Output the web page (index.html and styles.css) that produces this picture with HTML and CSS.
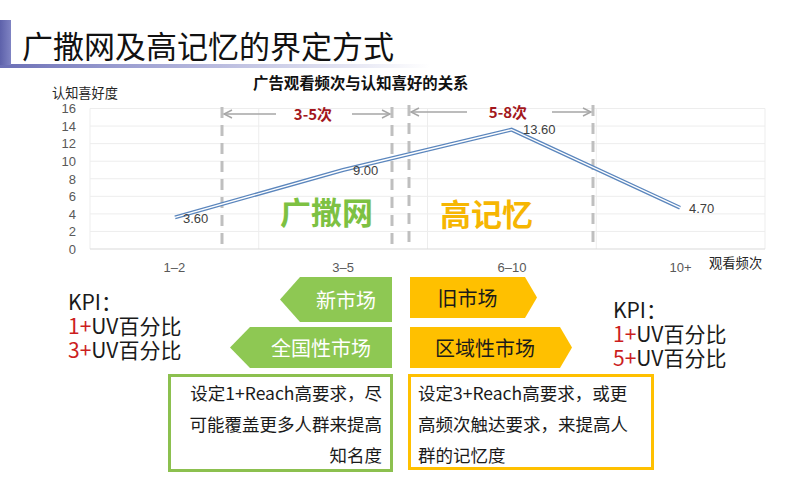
FILE: index.html
```html
<!DOCTYPE html>
<html lang="zh-CN">
<head>
<meta charset="utf-8">
<title>广撒网及高记忆的界定方式</title>
<link rel="stylesheet" href="styles.css">
</head>
<body>
<div class="slide">
  <header class="head">
    <div class="head-mark"></div>
    <div class="head-title">广撒网及高记忆的界定方式</div>
  </header>

  <svg class="chart" width="800" height="209" viewBox="0 68 800 209" xmlns="http://www.w3.org/2000/svg">
    <text class="c-title" x="253" y="88.7">广告观看频次与认知喜好的关系</text>
    <text class="c-axis-title" x="52" y="97.5">认知喜好度</text>

    <g class="grid">
      <line x1="90" y1="108.5" x2="765" y2="108.5"/>
      <line x1="90" y1="126.06" x2="765" y2="126.06"/>
      <line x1="90" y1="143.63" x2="765" y2="143.63"/>
      <line x1="90" y1="161.19" x2="765" y2="161.19"/>
      <line x1="90" y1="178.75" x2="765" y2="178.75"/>
      <line x1="90" y1="196.31" x2="765" y2="196.31"/>
      <line x1="90" y1="213.88" x2="765" y2="213.88"/>
      <line x1="90" y1="231.44" x2="765" y2="231.44"/>
      <line x1="90" y1="108.5" x2="90" y2="249"/>
      <line x1="258.75" y1="108.5" x2="258.75" y2="249"/>
      <line x1="427.5" y1="108.5" x2="427.5" y2="249"/>
      <line x1="596.25" y1="108.5" x2="596.25" y2="249"/>
      <line x1="765" y1="108.5" x2="765" y2="249"/>
    </g>
    <line class="axis" x1="90" y1="249" x2="765" y2="249"/>

    <g class="ytick">
      <text x="76" y="113.2">16</text>
      <text x="76" y="130.8">14</text>
      <text x="76" y="148.3">12</text>
      <text x="76" y="165.9">10</text>
      <text x="76" y="183.5">8</text>
      <text x="76" y="201">6</text>
      <text x="76" y="218.6">4</text>
      <text x="76" y="236.1">2</text>
      <text x="76" y="253.7">0</text>
    </g>

    <g class="xtick">
      <text x="174.4" y="271.5">1–2</text>
      <text x="343.1" y="271.5">3–5</text>
      <text x="511.9" y="271.5">6–10</text>
      <text x="680.6" y="271.5">10+</text>
    </g>
    <text class="c-xtitle" x="709" y="268">观看频次</text>

    <g class="dash">
      <line x1="222" y1="107" x2="222" y2="249"/>
      <line x1="392" y1="107" x2="392" y2="249"/>
      <line x1="409" y1="105" x2="409" y2="249"/>
      <line x1="593" y1="105" x2="593" y2="249"/>
    </g>

    <g class="span-arrow">
      <line x1="224" y1="114" x2="276" y2="114"/>
      <polyline points="232,110 224,114 232,118"/>
      <line x1="352" y1="114" x2="390" y2="114"/>
      <polyline points="382,110 390,114 382,118"/>
      <line x1="411" y1="112" x2="467" y2="112"/>
      <polyline points="419,108 411,112 419,116"/>
      <line x1="552" y1="112" x2="591" y2="112"/>
      <polyline points="583,108 591,112 583,116"/>
    </g>
    <text class="span-label" x="313" y="119.5">3-5次</text>
    <text class="span-label" x="508" y="117.5">5-8次</text>

    <polyline class="series-outer" points="175,217.4 343,170 511.6,129.6 680,207.7"/>
    <polyline class="series-inner" points="175,217.4 343,170 511.6,129.6 680,207.7"/>

    <g class="dlabel">
      <text x="183" y="222.7">3.60</text>
      <text x="353" y="174.7">9.00</text>
      <text x="523" y="133.7">13.60</text>
      <text x="689" y="212.7">4.70</text>
    </g>

    <text class="big big-green" x="280" y="223.8">广撒网</text>
    <text class="big big-gold" x="440" y="225.8">高记忆</text>
  </svg>

  <section class="bottom">
    <div class="half half-left">
      <div class="row-top">
        <div class="kpi kpi-left">
          <div>KPI<span class="colon">：</span></div>
          <div><span class="kpi-num">1+</span>UV百分比</div>
          <div><span class="kpi-num">3+</span>UV百分比</div>
        </div>
        <div class="tags tags-left">
          <div class="tag tag-green tag-g1">新市场</div>
          <div class="tag tag-green tag-g2">全国性市场</div>
        </div>
      </div>
      <div class="note note-green">设定1+Reach高要求，尽<br>可能覆盖更多人群来提高<br>知名度</div>
    </div>

    <div class="half half-right">
      <div class="row-top">
        <div class="tags tags-right">
          <div class="tag tag-gold tag-o1">旧市场</div>
          <div class="tag tag-gold tag-o2">区域性市场</div>
        </div>
        <div class="kpi kpi-right">
          <div>KPI<span class="colon">：</span></div>
          <div><span class="kpi-num">1+</span>UV百分比</div>
          <div><span class="kpi-num">5+</span>UV百分比</div>
        </div>
      </div>
      <div class="note note-gold">设定3+Reach高要求，或更<br>高频次触达要求，来提高人<br>群的记忆度</div>
    </div>
  </section>
</div>
</body>
</html>
```

FILE: styles.css
```css
html, body {
  margin: 0;
  padding: 0;
  background: #ffffff;
}

body {
  width: 800px;
  height: 477px;
  overflow: hidden;
  font-family: "Noto Sans CJK SC", "Noto Sans", sans-serif;
  color: #222222;
}

.slide {
  width: 800px;
  height: 477px;
  display: flex;
  flex-direction: column;
}

/* ---------- header ---------- */
.head {
  margin-top: 20px;
  height: 48px;
  display: flex;
  background: linear-gradient(to right, #6a6eb5 0, #9a9dd0 120px, rgba(255,255,255,0) 430px) left bottom / 100% 4px no-repeat;
}

.head-mark {
  width: 11px;
  height: 45px;
  background: linear-gradient(to right, #5d61aa, #7f83c3);
}

.head-title {
  padding-left: 11px;
  font-size: 31px;
  font-weight: 400;
  line-height: 50px;
  height: 48px;
  color: #111111;
  white-space: nowrap;
}

/* ---------- chart ---------- */
.chart {
  display: block;
  flex: none;
}

.c-title {
  font-family: "Noto Sans CJK SC", sans-serif;
  font-weight: 700;
  font-size: 15.4px;
  fill: #111111;
}

.c-axis-title {
  font-family: "Noto Sans CJK SC", sans-serif;
  font-size: 13.2px;
  fill: #262626;
}

.c-xtitle {
  font-family: "Noto Sans CJK SC", sans-serif;
  font-size: 13.3px;
  fill: #262626;
}

.grid line {
  stroke: #ededed;
  stroke-width: 1;
}

.axis {
  stroke: #d9d9d9;
  stroke-width: 1.2;
}

.ytick text {
  font-family: "Liberation Sans", Arial, sans-serif;
  font-size: 13px;
  fill: #595959;
  text-anchor: end;
}

.xtick text {
  font-family: "Liberation Sans", Arial, sans-serif;
  font-size: 13px;
  fill: #595959;
  text-anchor: middle;
}

.dash line {
  stroke: #bfbfbf;
  stroke-width: 3;
  stroke-dasharray: 11 7;
}

.span-arrow line,
.span-arrow polyline {
  stroke: #a6a6a6;
  stroke-width: 1.4;
  fill: none;
}

.span-label {
  font-family: "Noto Sans CJK SC", sans-serif;
  font-weight: 700;
  font-size: 15px;
  fill: #a3171c;
  text-anchor: middle;
}

.series-outer {
  fill: none;
  stroke: #5b86bd;
  stroke-width: 4;
  stroke-linejoin: miter;
}

.series-inner {
  fill: none;
  stroke: #ffffff;
  stroke-width: 1.3;
  stroke-linejoin: miter;
}

.dlabel text {
  font-family: "Liberation Sans", Arial, sans-serif;
  font-size: 13px;
  fill: #404040;
}

.big {
  font-family: "Noto Sans CJK SC", sans-serif;
  font-weight: 700;
  font-size: 31px;
}

.big-green {
  fill: #7dc142;
}

.big-gold {
  fill: #f6b602;
}

/* ---------- bottom ---------- */
.bottom {
  display: flex;
  flex: none;
}

.half {
  width: 400px;
  display: flex;
  flex-direction: column;
}

.row-top {
  display: flex;
}

.half-left .row-top {
  justify-content: space-between;
  padding-right: 8px;
}

.kpi {
  font-size: 21px;
  line-height: 24px;
  color: #1a1a1a;
  white-space: nowrap;
}

.colon {
  font-family: "Noto Sans CJK TC", "Noto Sans CJK SC", sans-serif;
}

.kpi-left {
  margin-left: 68px;
  margin-top: 12px;
}

.kpi-right {
  margin-left: 41px;
  margin-top: 20px;
}

.kpi-num {
  color: #cc1e1e;
}

.tags {
  display: flex;
  flex-direction: column;
}

.tags-left {
  align-items: flex-end;
  gap: 5px;
}

.tags-right {
  margin-left: 10px;
  align-items: flex-start;
  gap: 9px;
}

.tag {
  display: flex;
  align-items: center;
  justify-content: center;
  box-sizing: border-box;
  font-size: 20px;
  white-space: nowrap;
}

.tag-green {
  background: #8ec853;
  color: #ffffff;
  padding-left: 20px;
  clip-path: polygon(20px 0, 100% 0, 100% 100%, 20px 100%, 0 50%);
}

.tag-g1 {
  width: 112px;
  height: 45px;
}

.tag-g2 {
  width: 162px;
  height: 41px;
}

.tag-gold {
  background: #ffc000;
  color: #1a1a1a;
  padding-right: 12px;
  clip-path: polygon(0 0, calc(100% - 12px) 0, 100% 50%, calc(100% - 12px) 100%, 0 100%);
}

.tag-o1 {
  width: 127px;
  height: 41px;
}

.tag-o2 {
  width: 162px;
  height: 41px;
}

.note {
  box-sizing: border-box;
  font-size: 17.5px;
  line-height: 31px;
  color: #1a1a1a;
  white-space: nowrap;
  background: #ffffff;
}

.note-green {
  margin-top: 6px;
  margin-left: 168px;
  width: 225px;
  height: 98px;
  border: 3px solid #8cc04f;
  text-align: right;
  padding: 0 8px 0 0;
}

.note-gold {
  margin-top: 5px;
  margin-left: 8px;
  width: 246px;
  height: 96px;
  border: 3px solid #ffc000;
  text-align: left;
  padding: 0 0 0 7px;
}
```
